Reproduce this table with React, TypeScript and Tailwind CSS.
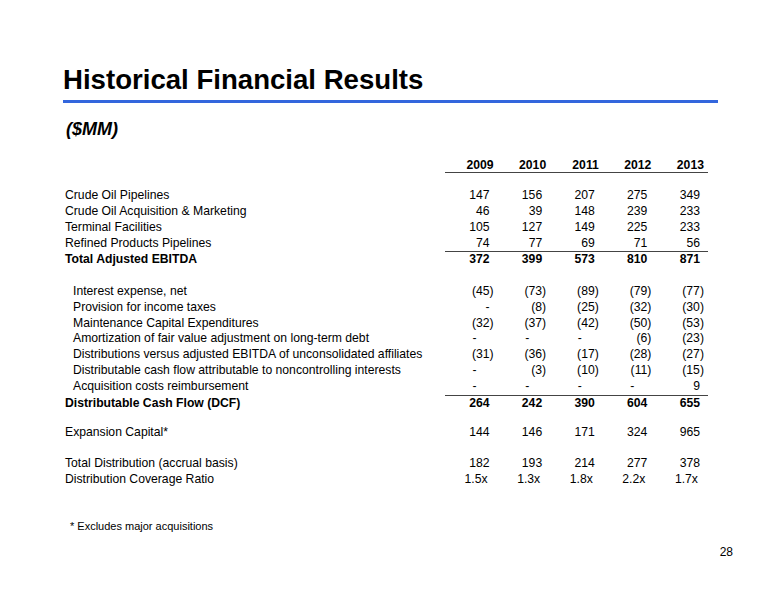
import clsx from 'clsx'

type Line = {
  label: string
  values: string[]
  bold?: boolean
  indent?: boolean
  rule?: boolean
}

const years = ['2009', '2010', '2011', '2012', '2013']

const segments: Line[] = [
  { label: 'Crude Oil Pipelines', values: ['147', '156', '207', '275', '349'] },
  { label: 'Crude Oil Acquisition & Marketing', values: ['46', '39', '148', '239', '233'] },
  { label: 'Terminal Facilities', values: ['105', '127', '149', '225', '233'] },
  { label: 'Refined Products Pipelines', values: ['74', '77', '69', '71', '56'] },
  { label: 'Total Adjusted EBITDA', values: ['372', '399', '573', '810', '871'], bold: true, rule: true },
]

// "~" is a dash sitting where the digits end, "-" is the usual accounting dash
const adjustments: Line[] = [
  { label: 'Interest expense, net', values: ['(45)', '(73)', '(89)', '(79)', '(77)'], indent: true },
  { label: 'Provision for income taxes', values: ['~', '(8)', '(25)', '(32)', '(30)'], indent: true },
  { label: 'Maintenance Capital Expenditures', values: ['(32)', '(37)', '(42)', '(50)', '(53)'], indent: true },
  { label: 'Amortization of fair value adjustment on long-term debt', values: ['-', '-', '-', '(6)', '(23)'], indent: true },
  { label: 'Distributions versus adjusted EBITDA of unconsolidated affiliates', values: ['(31)', '(36)', '(17)', '(28)', '(27)'], indent: true },
  { label: 'Distributable cash flow attributable to noncontrolling interests', values: ['-', '(3)', '(10)', '(11)', '(15)'], indent: true },
  { label: 'Acquisition costs reimbursement', values: ['-', '-', '-', '-', '9'], indent: true },
  { label: 'Distributable Cash Flow (DCF)', values: ['264', '242', '390', '604', '655'], bold: true, rule: true },
]

function pad(v: string) {
  if (v === '-') return 'pr-[21px]'
  if (v.startsWith('(')) return 'pr-[4px]'
  if (v.endsWith('x')) return 'pr-[10px]'
  return 'pr-[8px]'
}

function Row({ line }: { line: Line }) {
  return (
    <div
      className={clsx(
        'flex',
        line.bold && 'font-bold',
        line.rule ? 'h-[16px]' : 'h-[15.8px] leading-[15.8px]',
      )}
    >
      <div className={clsx('w-[380px]', line.indent && 'pl-[8px]', line.rule && 'pt-px leading-[15px]')}>
        {line.label}
      </div>
      <div className={clsx('flex', line.rule && 'border-t border-[#444] leading-[15px]')}>
        {line.values.map((v, i) => (
          <div key={i} className={clsx('w-[52.6px] text-right', pad(v))}>
            {v === '~' ? '-' : v}
          </div>
        ))}
      </div>
    </div>
  )
}

export default function App() {
  return (
    <div className="w-[776px] h-[600px] bg-white text-black font-['Liberation_Sans',Arial,sans-serif] overflow-hidden">
      <div className="pl-[63px] pt-[66px]">
        <h1 className="text-[27.6px] leading-[28px] font-bold">Historical Financial Results</h1>
        <div className="mt-[6px] h-[3px] w-[655px] bg-[#3366dd]" />
        <div className="mt-[17px] pl-[3px] text-[18px] leading-[18px] font-bold italic">($MM)</div>
      </div>

      <div className="pl-[65px] mt-[20px] text-[12.2px]">
        <div className="flex h-[15px] leading-[15.8px] font-bold">
          <div className="w-[380px]" />
          <div className="flex border-b border-[#444]">
            {years.map((y) => (
              <div key={y} className="w-[52.6px] text-right pr-[4px]">
                {y}
              </div>
            ))}
          </div>
        </div>

        <div className="mt-[15.3px]">
          {segments.map((l) => (
            <Row key={l.label} line={l} />
          ))}
        </div>

        <div className="mt-[16.6px]">
          {adjustments.map((l) => (
            <Row key={l.label} line={l} />
          ))}
        </div>

        <div className="mt-[14px]">
          <Row line={{ label: 'Expansion Capital*', values: ['144', '146', '171', '324', '965'] }} />
        </div>

        <div className="mt-[15.9px]">
          <Row line={{ label: 'Total Distribution (accrual basis)', values: ['182', '193', '214', '277', '378'] }} />
          <Row line={{ label: 'Distribution Coverage Ratio', values: ['1.5x', '1.3x', '1.8x', '2.2x', '1.7x'] }} />
        </div>

        <div className="mt-[32px] pl-[5px] text-[11px] leading-[13px]">* Excludes major acquisitions</div>
      </div>

      <div className="mt-[12px] flex justify-end pr-[43px] text-[12px] leading-[14px]">28</div>
    </div>
  )
}
